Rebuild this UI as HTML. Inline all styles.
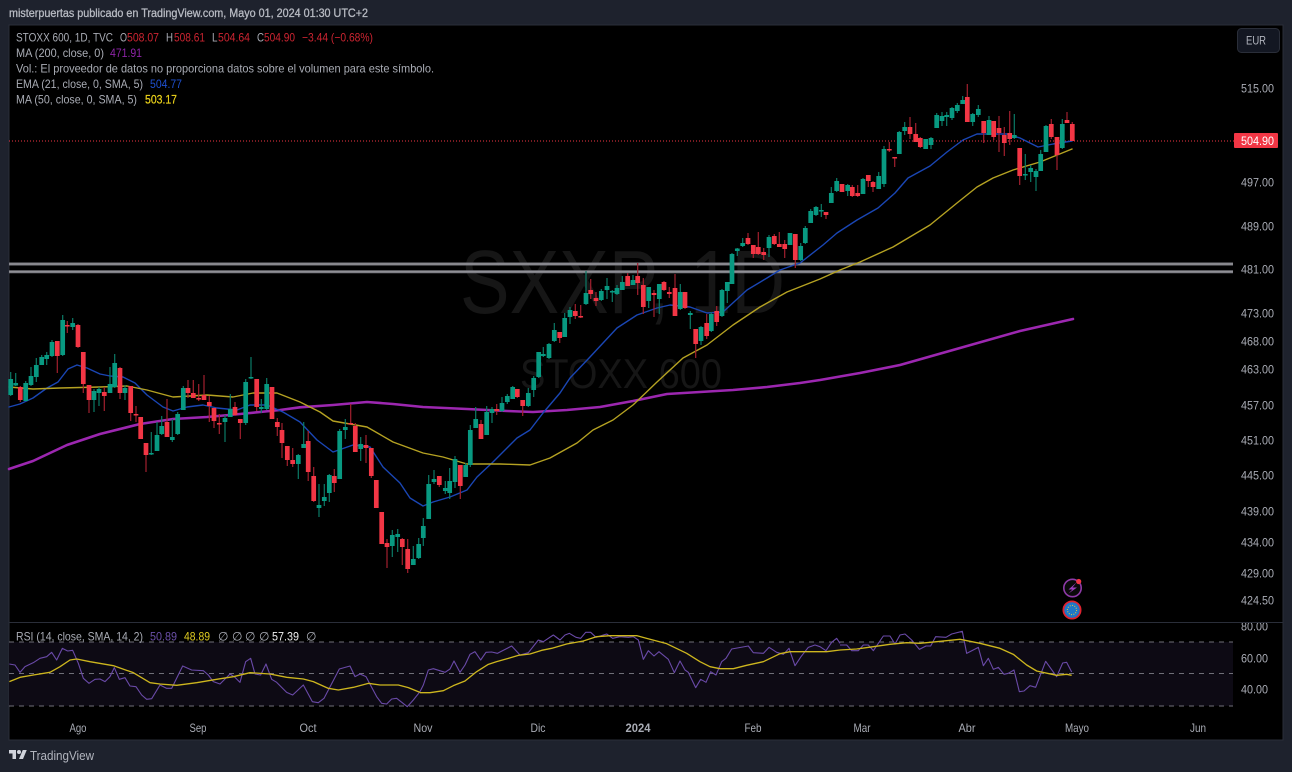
<!DOCTYPE html>
<html lang="es"><head><meta charset="utf-8"><title>STOXX 600 - TradingView</title>
<style>
html,body{margin:0;padding:0;background:#1e222d;width:1292px;height:772px;overflow:hidden}
svg{display:block;font-family:"Liberation Sans",sans-serif;filter:blur(.3px)}
text{font-size:12px}
.l{fill:#a9acb5}
.a{fill:#a9acb5}
.t{fill:#a9acb5;text-anchor:middle}
.r{fill:#cc2431}
</style></head><body>
<svg width="1292" height="772" viewBox="0 0 1292 772" xmlns="http://www.w3.org/2000/svg">
<rect width="1292" height="772" fill="#1e222d"/>
<rect x="9" y="25" width="1274" height="715" fill="#000" stroke="#2a2e39" stroke-width="1"/>
<text x="9" y="17" fill="#b8bbc3" stroke="#b8bbc3" stroke-width=".3" textLength="359" lengthAdjust="spacingAndGlyphs">misterpuertas publicado en TradingView.com, Mayo 01, 2024 01:30 UTC+2</text>

<!-- watermark -->
<text x="460" y="313" style="font-size:90px" fill="#161616" textLength="325" lengthAdjust="spacingAndGlyphs">SXXP, 1D</text>
<text x="520" y="388" style="font-size:42px" fill="#161616" textLength="202" lengthAdjust="spacingAndGlyphs">STOXX 600</text>

<!-- horizontal levels -->
<path d="M9 264H1233M9 271.7H1233" stroke="#77777e" stroke-width="3" fill="none"/>
<path d="M9 264H1233M9 271.7H1233" stroke="#98989e" stroke-width="1" fill="none"/>
<path d="M9 141H1234" stroke="#f23645" stroke-width="1" stroke-dasharray="1 2" fill="none"/>

<!-- indicators under candles -->
<g fill="none" stroke-linejoin="round" stroke-linecap="round">
<path stroke="#9c27b0" stroke-width="2.6" d="M9 469L33 461L67 445L100 434L140 424L173 419L207 417L240 414L280 410L300 407.3L333 405L367 402L393 404L423 407L467 409L507 411L533 412L567 410L600 407L633 401L667 394L700 392L733 390L767 387L800 383L820 380L860 373L900 365L960 348L1020 331L1073 319"/>
<path stroke="#1a46b4" stroke-width="1.4" d="M9 407L20 404L33 398L47 388L58 382L68 369L77 365L87 368L100 374L110 376L123 377L135 383L147 395L163 407L173 411L187 407L203 405L217 408L237 410L250 405L267 405L283 412L300 422L317 440L333 452L353 445L370 447L383 467L400 483L410 498L423 506L433 502L450 497L467 490L477 477L493 462L517 438L530 430L543 413L560 393L570 378L590 357L617 328L637 315L657 308L670 305L690 307L707 313L723 312L747 290L767 278L780 270L800 263L823 245L837 233L857 220L878 208L895 193L908 178L930 166L947 152L963 140L977 134L1007 134L1020 138L1038 147L1053 144L1072 141"/>
<path stroke="#b5a222" stroke-width="1.4" d="M9 387L33 389L60 388L100 387L127 386L147 390L173 397L207 395L233 397L253 393L277 393L300 402L320 412L333 421L367 427L393 442L423 453L443 457L467 464L500 464L530 465L550 458L577 443L593 430L613 420L633 405L657 382L683 358L707 345L733 325L760 307L787 292L820 279L840 270L860 262L893 247L930 225L957 203L977 187L993 178L1013 170L1040 162L1072 149"/>
</g>

<!-- candles: green wicks -->
<path fill="none" stroke="#0b7a66" stroke-width="1.2" d="M10.7 372V396M15.7 373V386M25.7 381V401M31 367V386M36.3 358V382M41.7 355V365M46.7 352V365M52 340V357M62.7 315V356M72.7 318V330M94 389V412M99 387V406M110 367V393M114.7 354V388M125 385V400M151.3 432V455M157 422V451M161.7 416V435M172.3 419V442M177.7 412V435M183.3 386V410M225 415V442M230.3 394V417M245.7 379V425M251 357V379M261.3 399V413M266.7 378V410M298.3 454V479M303.7 422V448M319 484V517M324.3 484V506M329.3 474V502M339.7 429V479M345.3 419V439M360.7 437V461M392.3 530V557M397.7 529V552M413.3 546V565M418.7 538V559M423.3 518V546M428.7 475V519M434 470V484M445.3 481V494M449.7 468V499M455 456V488M465.7 463V477M470.3 425V467M475.7 407V428M486.7 406V435M492 407V423M502 397V412M507.3 394V404M512.7 386V399M528.3 388V407M533.7 376V397M538.7 352V378M543.3 347V357M549 343V359M554.3 323V342M564.7 313V337M570 307V324M586 271V305M601.3 289V301M607 278V299M612.3 290V302M617 285V295M622.3 276V290M633 275V285M648.7 287V308M659.3 284V314M680.3 284V310M690.3 311V329M701 326V345M711.3 312V332M722 289V317M727.3 282V303M732 253V284M737.3 248V256M742.7 238V247M769 235V257M790 233V245M800.7 243V261M805.3 226V244M810.7 209V223M816 206V216M821.3 204V217M831.3 187V203M836.7 178V192M847.7 184V196M863 178V194M878.7 172V189M884 146V187M899.3 131V154M904.7 122V135M925.7 139V149M931 137V149M936.7 113V128M942 112V126M946.7 112V126M952 107V120M957.3 103V113M962.7 96V104M972.7 113V126M978.3 105V117M989 116V135M1014.3 114V139M1025.3 154V180M1030.7 165V182M1036 169V191M1040.7 150V171M1046 125V152M1062.3 119V149"/>
<!-- red wicks -->
<path fill="none" stroke="#a2202e" stroke-width="1.2" d="M20.3 386V402M57.3 341V373M67.3 321V333M78 324V348M83.3 352V393M89 385V413M104.3 387V411M120 367V399M130.7 386V421M136 406V422M140.7 417V439M146 443V472M167 399V437M188 380V398M193.3 380V398M198.7 384V401M204 375V400M209.3 396V422M214 408V428M219.3 414V434M235 402V416M240.3 419V439M256.7 379V411M272 387V419M277.3 418V436M282 423V458M287.3 446V466M292.7 448V467M308.2 431V481M313.7 467V502M334.3 469V492M350.7 404V424M355.3 423V452M366 435V463M371.3 448V478M376.3 480V508M381.7 512V544M387 539V568M402.3 538V565M407.7 539V573M439.3 476V487M460.3 465V499M481 420V439M496.7 404V415M517.3 389V398M522.7 400V416M559.7 332V343M575.3 304V319M580.7 305V318M590.7 279V299M596 292V306M627.7 273V286M637.7 263V295M643.3 278V314M654 290V317M664 281V291M669.3 287V298M675 274V316M685 292V309M695.7 329V358M706.7 314V339M716.7 306V326M748 233V245M753.3 245V258M758.3 232V255M763.7 248V260M774.3 234V245M779.3 232V247M784.7 240V258M795.3 234V268M826 212V219M842 184V192M852.3 185V197M857.7 185V197M868.3 175V187M873 181V192M889.3 142V152M894.7 157V167M910 117V139M915.7 123V142M920.3 137V148M967.3 84V122M983.7 121V143M993.7 121V140M999 116V152M1004.3 127V156M1009.7 111V145M1019.7 148V185M1051.3 119V139M1057 137V170M1067 112V123M1072.3 122V141"/>
<!-- green bodies -->
<path fill="none" stroke="#089981" stroke-width="4.7" d="M10.7 379V395M15.7 383V385.5M25.7 383V401M31 376V385M36.3 365V377M41.7 357V365M46.7 355V359M52 342V356M62.7 320V355M72.7 323V327M94 391V400M99 389V393M110 384V393M114.7 363V387M125 388V393M151.3 453V454.5M157 435V451M161.7 426V434M172.3 437V440M177.7 414V434M183.3 388V410M225 418V422M230.3 409V417M245.7 382V423M251 377V378.5M261.3 407V409M266.7 384V409M298.3 455V464M303.7 444V448M319 505V508M324.3 497V501M329.3 475V493M339.7 431V479M345.3 427V430M360.7 444V449M392.3 535V546M397.7 534V537M413.3 559V565M418.7 544V558M423.3 526V538M428.7 484V519M434 479V482M445.3 488V491M449.7 481V493M455 459V482M465.7 465V477M470.3 430V465M475.7 419V428M486.7 412V435M492 409V413M502 403V411M507.3 396V402M512.7 387V399M528.3 393V406M533.7 378V390M538.7 352V377M543.3 354V356M549 344V358M554.3 330V341M564.7 318V337M570 310V317M586 293V304M601.3 291V300M607 286V290M612.3 291V292.5M617 288V294M622.3 282V290M633 280V285M648.7 287V301M659.3 284V299M680.3 292V309M690.3 313V315M701 327V341M711.3 314V331M722 290V316M727.3 282V291M732 254V284M737.3 248.5V251M742.7 243V246M769 237V248M790 233V245M800.7 246V260M805.3 228V243M810.7 211V223M816 207V215M821.3 210V211.5M831.3 193V203M836.7 181V191M847.7 185V191M863 179V194M878.7 176V189M884 149V184M899.3 132V154M904.7 127V131M925.7 139V149M931 138V145M936.7 115V128M942 116V121M946.7 115V117M952 108V118M957.3 105V111M962.7 100V104M972.7 114V122M978.3 109V115M989 120V135M1014.3 135V138M1025.3 174V175.5M1030.7 168V172M1036 171V177M1040.7 154V171M1046 126V152M1062.3 124V148"/>
<!-- red bodies -->
<path fill="none" stroke="#f23645" stroke-width="4.7" d="M20.3 387V400M57.3 341V356M67.3 325V326.5M78 325V347M83.3 352V384M89 385V400M104.3 392V396M120 368V393M130.7 386V413M136 414V415.5M140.7 417V439M146 443V455M167 422V437M188 388V393M193.3 393V398M198.7 398V399.5M204 395V400M209.3 402V406M214 408V421M219.3 423V424.5M235 407V415M240.3 419V423M256.7 379V407M272 387V419M277.3 422V427M282 430V443M287.3 446V460M292.7 460V464M308.2 441V472M313.7 476V501M334.3 476V483M350.7 423V424.5M355.3 426V452M366 445V448M371.3 448V476M376.3 480V508M381.7 512V544M387 543V547M402.3 539V547M407.7 549V569M439.3 476V485M460.3 465V486M481 424V439M496.7 409V411M517.3 389V397M522.7 400V406M559.7 332V338M575.3 311V316M580.7 316V317.5M590.7 290V294M596 298V301M627.7 276V286M637.7 276V283M643.3 285V307M654 293V295M664 282V290M669.3 292V294M675 288V316M685 292V308M695.7 329V344M706.7 323V336M716.7 311V322M748 238V244M753.3 245V254M758.3 247V254M763.7 252V255M774.3 236V244M779.3 244V247M784.7 244V249M795.3 234V260M826 212V215M842 184V192M852.3 187V196M857.7 193V196M868.3 175V181M873 182V187M889.3 149V150.5M894.7 157V158.5M910 127V134M915.7 134V142M920.3 138V147M967.3 97V122M983.7 121V133M993.7 121V137M999 128V133M1004.3 135V143M1009.7 133V139M1019.7 148V176M1051.3 124V137M1057 137V155M1067 120V123M1072.3 124V141"/>

<!-- legend -->
<text class="l" x="16" y="41.5" textLength="97" lengthAdjust="spacingAndGlyphs">STOXX 600, 1D, TVC</text>
<text class="l" x="120" y="41.5" textLength="7" lengthAdjust="spacingAndGlyphs">O</text><text class="r" x="127" y="41.5" textLength="32" lengthAdjust="spacingAndGlyphs">508.07</text>
<text class="l" x="166" y="41.5" textLength="7" lengthAdjust="spacingAndGlyphs">H</text><text class="r" x="174" y="41.5" textLength="31" lengthAdjust="spacingAndGlyphs">508.61</text>
<text class="l" x="212" y="41.5" textLength="5.5" lengthAdjust="spacingAndGlyphs">L</text><text class="r" x="218" y="41.5" textLength="32" lengthAdjust="spacingAndGlyphs">504.64</text>
<text class="l" x="257" y="41.5" textLength="7" lengthAdjust="spacingAndGlyphs">C</text><text class="r" x="264" y="41.5" textLength="31" lengthAdjust="spacingAndGlyphs">504.90</text>
<text class="r" x="302" y="41.5" textLength="71" lengthAdjust="spacingAndGlyphs">−3.44 (−0.68%)</text>
<text class="l" x="16" y="57" textLength="88" lengthAdjust="spacingAndGlyphs">MA (200, close, 0)</text>
<text x="110" y="57" fill="#8e24a8" textLength="32" lengthAdjust="spacingAndGlyphs">471.91</text>
<text class="l" x="16" y="72.5" textLength="418" lengthAdjust="spacingAndGlyphs">Vol.: El proveedor de datos no proporciona datos sobre el volumen para este símbolo.</text>
<text class="l" x="16" y="88" textLength="127" lengthAdjust="spacingAndGlyphs">EMA (21, close, 0, SMA, 5)</text>
<text x="150" y="88" fill="#1e50d0" textLength="32" lengthAdjust="spacingAndGlyphs">504.77</text>
<text class="l" x="16" y="103.5" textLength="121" lengthAdjust="spacingAndGlyphs">MA (50, close, 0, SMA, 5)</text>
<text x="145" y="103.5" fill="#ecd31a" stroke="#ecd31a" stroke-width=".2" textLength="32" lengthAdjust="spacingAndGlyphs">503.17</text>

<!-- EUR button -->
<rect x="1237.5" y="28.5" width="42" height="24" rx="4" fill="#131722" stroke="#2a2e39"/>
<text x="1246" y="44.5" fill="#b2b5be" textLength="20" lengthAdjust="spacingAndGlyphs">EUR</text>

<!-- price axis -->
<text class="a" x="1241" y="92.5" textLength="33" lengthAdjust="spacingAndGlyphs">515.00</text>
<text class="a" x="1241" y="186.5" textLength="33" lengthAdjust="spacingAndGlyphs">497.00</text>
<text class="a" x="1241" y="230.5" textLength="33" lengthAdjust="spacingAndGlyphs">489.00</text>
<text class="a" x="1241" y="273.5" textLength="33" lengthAdjust="spacingAndGlyphs">481.00</text>
<text class="a" x="1241" y="317.5" textLength="33" lengthAdjust="spacingAndGlyphs">473.00</text>
<text class="a" x="1241" y="345.5" textLength="33" lengthAdjust="spacingAndGlyphs">468.00</text>
<text class="a" x="1241" y="373.5" textLength="33" lengthAdjust="spacingAndGlyphs">463.00</text>
<text class="a" x="1241" y="409.5" textLength="33" lengthAdjust="spacingAndGlyphs">457.00</text>
<text class="a" x="1241" y="444.5" textLength="33" lengthAdjust="spacingAndGlyphs">451.00</text>
<text class="a" x="1241" y="479.5" textLength="33" lengthAdjust="spacingAndGlyphs">445.00</text>
<text class="a" x="1241" y="515.5" textLength="33" lengthAdjust="spacingAndGlyphs">439.00</text>
<text class="a" x="1241" y="546.5" textLength="33" lengthAdjust="spacingAndGlyphs">434.00</text>
<text class="a" x="1241" y="577.5" textLength="33" lengthAdjust="spacingAndGlyphs">429.00</text>
<text class="a" x="1241" y="604.5" textLength="33" lengthAdjust="spacingAndGlyphs">424.50</text>
<text class="a" x="1241" y="630.5" textLength="27" lengthAdjust="spacingAndGlyphs">80.00</text>
<text class="a" x="1241" y="662.5" textLength="27" lengthAdjust="spacingAndGlyphs">60.00</text>
<text class="a" x="1241" y="693.5" textLength="27" lengthAdjust="spacingAndGlyphs">40.00</text>
<rect x="1234" y="133" width="44" height="15" rx="1" fill="#f23645"/>
<text x="1241" y="145" fill="#fff" textLength="33" lengthAdjust="spacingAndGlyphs">504.90</text>

<!-- event icons -->
<circle cx="1072.5" cy="588" r="8.7" fill="#0a0a0a" stroke="#8e3aa8" stroke-width="1.6"/>
<path d="M1076.5 582.5L1068.5 589.5H1072.5L1068.5 593.5L1077 587.5H1072.5Z" fill="#9c3fc0"/>
<circle cx="1078.7" cy="581.5" r="2.6" fill="#f23645"/>
<circle cx="1072" cy="610" r="8.6" fill="#1f78c8" stroke="#e0222f" stroke-width="1.8"/>
<circle cx="1072" cy="610" r="4.6" fill="none" stroke="#d8c24a" stroke-width="1.1" stroke-dasharray="1 1.4"/>

<!-- RSI pane -->
<path d="M9 622.5H1283" stroke="#2a2e39" stroke-width="1"/>
<rect x="9" y="642" width="1224" height="64" fill="#0d0a14"/>
<path d="M9 642H1233M9 673.5H1233M9 706H1233" stroke="#6f6f78" stroke-width="1" stroke-dasharray="5 5" fill="none"/>
<text class="l" x="16" y="640.5" textLength="127" lengthAdjust="spacingAndGlyphs">RSI (14, close, SMA, 14, 2)</text>
<text x="150" y="640.5" fill="#6a4fa8" textLength="27" lengthAdjust="spacingAndGlyphs">50.89</text>
<text x="184" y="640.5" fill="#e0cc20" textLength="26" lengthAdjust="spacingAndGlyphs">48.89</text>
<text class="l" x="218" y="640.5">∅</text><text class="l" x="232" y="640.5">∅</text><text class="l" x="245" y="640.5">∅</text><text class="l" x="259" y="640.5">∅</text>
<text x="272" y="640.5" fill="#f0f0f0" textLength="27" lengthAdjust="spacingAndGlyphs">57.39</text>
<text class="l" x="306" y="640.5">∅</text>

<g fill="none" stroke-linejoin="round" stroke-width="3.3">
<g transform="translate(0,620) scale(.33333)">
<path stroke="#6a4aa8" d="M28 132L45 135L60 157L75 140L100 128L120 115L140 110L155 97L170 120L187 85L203 93L218 91L235 130L250 175L267 190L285 178L300 177L315 185L330 170L343 143L358 178L375 173L390 198L408 200L425 225L440 238L455 236L480 195L500 205L515 205L548 138L575 150L610 152L625 165L640 185L660 192L690 162L705 172L720 187L737 125L752 115L765 162L782 165L798 132L815 178L830 187L860 217L878 225L910 195L937 245L955 248L972 235L1018 147L1050 138L1065 170L1080 162L1098 170L1130 230L1145 250L1160 252L1175 237L1190 235L1222 260L1240 240L1260 215"/>
<path stroke="#cdb61e" stroke-width="4" d="M28 185L60 172L100 165L150 157L180 140L210 120L230 117L270 125L340 137L400 158L450 188L480 192L530 196L590 188L650 178L700 170L750 158L810 162L860 172L910 177L940 185L985 205L1015 210L1060 202L1105 190L1140 195L1195 195L1225 203L1260 217"/>
</g>
<g transform="translate(420,620) scale(.33333)">
<path stroke="#6a4aa8" d="M0 215L10 195L25 150L40 146L75 157L90 147L102 123L120 157L135 135L150 103L165 95L182 120L198 97L215 96L232 100L275 78L300 105L325 98L355 60L370 65L400 45L420 60L435 45L448 40L468 52L482 55L497 37L512 37L528 52L560 42L578 55L600 50L625 52L640 50L655 60L670 118L685 92L702 108L717 95L745 118L763 158L780 123L795 150L805 157L827 203L842 178L858 187L872 155L888 165L905 125L918 115L935 87L985 78L1000 98L1030 100L1047 82L1070 97L1090 103L1107 85L1125 137L1143 110L1165 82L1185 75L1200 80L1218 92L1235 67L1250 55L1260 70"/>
<path stroke="#cdb61e" stroke-width="4" d="M0 218L30 218L70 212L100 197L135 183L170 155L205 133L230 125L265 115L295 106L330 102L365 91L395 85L440 72L490 63L530 50L570 47L650 47L680 55L740 71L800 100L840 125L870 140L900 146L940 146L980 136L1030 125L1080 101L1110 95L1220 95L1260 90"/>
</g>
<g transform="translate(840,570) scale(.33333)">
<path stroke="#6a4aa8" d="M0 225L20 225L35 242L55 242L70 225L85 225L100 242L130 198L150 198L165 222L180 195L195 192L215 210L238 238L258 228L272 228L287 200L318 202L335 192L367 184L380 250L415 232L430 287L445 265L460 298L475 292L492 313L505 310L522 300L538 365L552 363L570 347L587 352L617 274L650 320L668 279L680 277L695 306"/>
<path stroke="#cdb61e" stroke-width="4" d="M0 240L50 237L100 230L150 223L200 218L240 220L290 215L360 208L420 220L480 235L520 253L560 285L590 303L650 316L680 313L695 316"/>
</g>
</g>

<!-- time axis -->
<text class="t" x="78" y="732" textLength="17" lengthAdjust="spacingAndGlyphs">Ago</text>
<text class="t" x="198" y="732" textLength="17" lengthAdjust="spacingAndGlyphs">Sep</text>
<text class="t" x="308" y="732" textLength="17" lengthAdjust="spacingAndGlyphs">Oct</text>
<text class="t" x="423" y="732" textLength="19" lengthAdjust="spacingAndGlyphs">Nov</text>
<text class="t" x="538" y="732" textLength="15" lengthAdjust="spacingAndGlyphs">Dic</text>
<text class="t" x="638" y="732" font-weight="700" textLength="25" lengthAdjust="spacingAndGlyphs">2024</text>
<text class="t" x="753" y="732" textLength="17" lengthAdjust="spacingAndGlyphs">Feb</text>
<text class="t" x="862" y="732" textLength="17" lengthAdjust="spacingAndGlyphs">Mar</text>
<text class="t" x="967" y="732" textLength="17" lengthAdjust="spacingAndGlyphs">Abr</text>
<text class="t" x="1077" y="732" textLength="24" lengthAdjust="spacingAndGlyphs">Mayo</text>
<text class="t" x="1198" y="732" textLength="16" lengthAdjust="spacingAndGlyphs">Jun</text>

<!-- footer logo -->
<g transform="translate(9,748) scale(.5)" fill="#d1d4dc"><path d="M14 22H7V11H0V4h14v18zM28 22h-8l7.5-18h8L28 22z"/><circle cx="20" cy="8" r="4"/></g>
<text x="30" y="760" style="font-size:13px" fill="#b2b5be" textLength="64" lengthAdjust="spacingAndGlyphs">TradingView</text>
</svg>
</body></html>
